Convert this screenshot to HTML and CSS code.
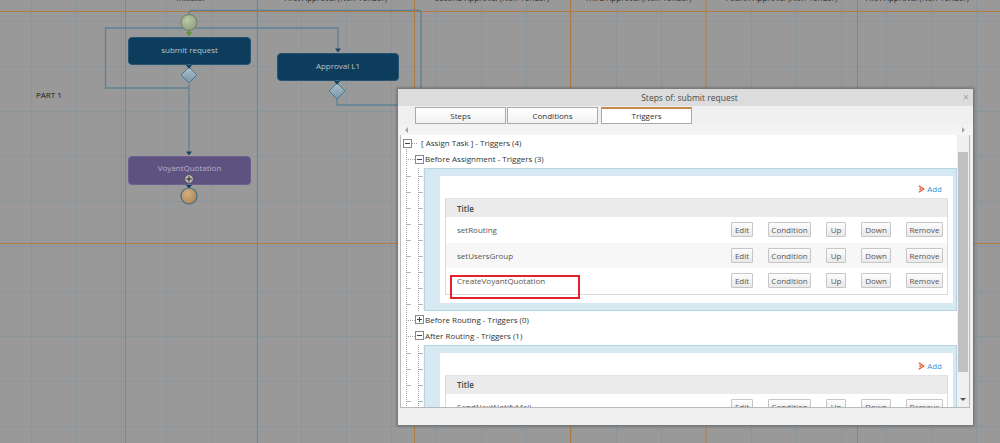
FILE: index.html
```html
<!DOCTYPE html>
<html>
<head>
<meta charset="utf-8">
<title>Steps of: submit request</title>
<link rel="stylesheet" href="styles.css">
</head>
<body>
<div class="canvas">
  <div class="lanes">
    <div class="lane lane0"></div>
    <div class="lane lane1">Initiator</div>
    <div class="lane lane2">First Approval (Non-Tender)</div>
    <div class="lane lane3">Second Approval (Non-Tender)</div>
    <div class="lane lane4">Third Approval (Non-Tender)</div>
    <div class="lane lane5">Fourth Approval (Non-Tender)</div>
    <div class="lane lane6">Fifth Approval (Non-Tender)</div>
  </div>

  <div class="node blue n-submit">submit request</div>
  <div class="node blue n-approval">Approval L1</div>
  <div class="node purple n-voyant">VoyantQuotation</div>
  <div class="part">PART 1</div>

  <svg class="wires" width="1000" height="443" viewBox="0 0 1000 443">
    <defs>
      <linearGradient id="dia" x1="0" y1="0" x2="0" y2="1">
        <stop offset="0" stop-color="#b0c2cf"/>
        <stop offset="1" stop-color="#7694a9"/>
      </linearGradient>
      <radialGradient id="startg" cx="0.4" cy="0.35" r="0.7">
        <stop offset="0" stop-color="#bccaa6"/>
        <stop offset="1" stop-color="#8b9e77"/>
      </radialGradient>
      <radialGradient id="endg" cx="0.4" cy="0.35" r="0.7">
        <stop offset="0" stop-color="#d4ae80"/>
        <stop offset="1" stop-color="#ae8556"/>
      </radialGradient>
    </defs>
    <g stroke="#b07a42" stroke-width="1">
      <line x1="125.5" y1="0" x2="125.5" y2="443"/>
      <line x1="257.5" y1="0" x2="257.5" y2="443"/>
      <line x1="414.5" y1="0" x2="414.5" y2="443"/>
      <line x1="570.5" y1="0" x2="570.5" y2="443"/>
      <line x1="706" y1="0" x2="706" y2="443" stroke="#a98a6a" stroke-width="2"/>
      <line x1="857.5" y1="0" x2="857.5" y2="443"/>
      <line x1="0" y1="11.5" x2="1000" y2="11.5"/>
      <line x1="0" y1="243.5" x2="1000" y2="243.5"/>
    </g>
    <g fill="none" stroke="#5b8294" stroke-width="1.3">
      <path d="M189 15 V13 Q189 10.3 191.7 10.3 H418.3 Q421 10.3 421 13 V100"/>
      <path d="M189 88 H105.5 V28 H338 V50"/>
      <path d="M189 84 V154"/>
      <path d="M337 99 V105 H400"/>
      <path d="M189 64 V67"/>
      <path d="M337.5 80 V83"/>
      <path d="M189 184 V188"/>
    </g>
    <circle cx="189" cy="22.5" r="8" fill="url(#startg)" stroke="#6e7d69" stroke-width="1"/>
    <path d="M189 30.5 V33" stroke="#5f8f3a" stroke-width="1.5"/>
    <polygon points="186,32 192,32 189,36.5" fill="#5f943a"/>
    <polygon points="181,75 189,67 197,75 189,83" fill="url(#dia)" stroke="#4b7590" stroke-width="1"/>
    <polygon points="329,91 337,83 345,91 337,99" fill="url(#dia)" stroke="#4b7590" stroke-width="1"/>
    <g fill="#17435f">
      <polygon points="186,65 192,65 189,69"/>
      <polygon points="335,48.5 341,48.5 338,52.5"/>
      <polygon points="334,81 340,81 337,85"/>
      <polygon points="186,151.5 192,151.5 189,155.5"/>
      <polygon points="186,185 192,185 189,189"/>
    </g>
    <circle cx="189" cy="196" r="8" fill="url(#endg)" stroke="#3f6d8a" stroke-width="1.2"/>
    <circle cx="189" cy="179" r="4.3" fill="#b9b9b9" stroke="#4a4a4a" stroke-width="0.8"/>
    <path d="M186.3 179 H191.7 M189 176.3 V181.7" stroke="#222" stroke-width="1"/>
  </svg>
</div>

<div class="dialog">
  <div class="titlebar">
    <span class="title">Steps of: submit request</span>
    <span class="close">×</span>
  </div>
  <div class="tabs">
    <div class="tab">Steps</div>
    <div class="tab">Conditions</div>
    <div class="tab active">Triggers</div>
  </div>
  <div class="scroller"><span class="arr-l"></span><span class="arr-r"></span></div>
  <div class="panel">
    <div class="tree">
      <div class="trow">
        <span class="gut g1"><span class="exp minus"></span></span>
        <span class="label">[ Assign Task ] - Triggers (4)</span>
      </div>
      <div class="trow">
        <span class="gut g2"><span class="exp minus"></span></span>
        <span class="label">Before Assignment - Triggers (3)</span>
      </div>
      <div class="bsec">
        <div class="gut gs"></div>
        <div class="bpanel">
          <div class="inner">
            <div class="addrow">
              <svg class="addico" width="7" height="8" viewBox="0 0 7 8"><path d="M0.8 0.8 L5.8 4 L0.8 7.2" fill="none" stroke="#e2582b" stroke-width="1.2"/><path d="M1.5 2.6 L3.8 4 L1.5 5.4 Z" fill="#e2582b"/></svg>
              <span class="addtxt">Add</span>
            </div>
            <div class="tbl">
              <div class="thead">Title</div>
              <div class="tr">
                <span class="name">setRouting</span>
                <div class="btns"><span class="btn b-edit">Edit</span><span class="btn b-cond">Condition</span><span class="btn b-up">Up</span><span class="btn b-down">Down</span><span class="btn b-rem">Remove</span></div>
              </div>
              <div class="tr alt">
                <span class="name">setUsersGroup</span>
                <div class="btns"><span class="btn b-edit">Edit</span><span class="btn b-cond">Condition</span><span class="btn b-up">Up</span><span class="btn b-down">Down</span><span class="btn b-rem">Remove</span></div>
              </div>
              <div class="tr">
                <span class="name">CreateVoyantQuotation</span>
                <div class="btns"><span class="btn b-edit">Edit</span><span class="btn b-cond">Condition</span><span class="btn b-up">Up</span><span class="btn b-down">Down</span><span class="btn b-rem">Remove</span></div>
                <span class="mark"></span>
              </div>
            </div>
          </div>
        </div>
      </div>
      <div class="trow">
        <span class="gut g2"><span class="exp plus"></span></span>
        <span class="label">Before Routing - Triggers (0)</span>
      </div>
      <div class="trow">
        <span class="gut g2"><span class="exp minus"></span></span>
        <span class="label">After Routing - Triggers (1)</span>
      </div>
      <div class="bsec">
        <div class="gut gs"></div>
        <div class="bpanel">
          <div class="inner">
            <div class="addrow">
              <svg class="addico" width="7" height="8" viewBox="0 0 7 8"><path d="M0.8 0.8 L5.8 4 L0.8 7.2" fill="none" stroke="#e2582b" stroke-width="1.2"/><path d="M1.5 2.6 L3.8 4 L1.5 5.4 Z" fill="#e2582b"/></svg>
              <span class="addtxt">Add</span>
            </div>
            <div class="tbl">
              <div class="thead">Title</div>
              <div class="tr">
                <span class="name">SendNextNotifyMail</span>
                <div class="btns"><span class="btn b-edit">Edit</span><span class="btn b-cond">Condition</span><span class="btn b-up">Up</span><span class="btn b-down">Down</span><span class="btn b-rem">Remove</span></div>
              </div>
            </div>
          </div>
        </div>
      </div>
    </div>
    <div class="vscroll">
      <div class="thumb"></div>
      <span class="arr-d"></span>
    </div>
  </div>
</div>
</body>
</html>
```

FILE: styles.css
```css
* { box-sizing: border-box; }
html, body { margin: 0; padding: 0; }
body {
  width: 1000px;
  height: 443px;
  overflow: hidden;
  position: relative;
  font-family: "Open Sans", "Liberation Sans", sans-serif;
  font-size: 8px;
  color: #333;
  background: #999;
}

/* ---------- diagram canvas ---------- */
.canvas {
  position: relative;
  width: 1000px;
  height: 443px;
  overflow: hidden;
  background-color: #999999;
  background-image:
    linear-gradient(to right, #8b969c 1px, transparent 1px),
    linear-gradient(to bottom, #8b969c 1px, transparent 1px);
  background-size: 45px 45px, 45px 45px;
  background-position: 31px 0, 0 21px;
}
.lanes {
  display: flex;
  margin-top: -7px;
  height: 10px;
  line-height: 10px;
  color: #2c2c2c;
  white-space: nowrap;
}
.lane { text-align: center; flex: none; }
.lane0 { width: 125px; }
.lane1 { width: 132px; }
.lane2 { width: 157px; }
.lane3 { width: 156px; }
.lane4 { width: 136px; }
.lane5 { width: 151px; }
.lane6 { width: 120px; }

.node {
  position: absolute;
  display: flex;
  align-items: center;
  justify-content: center;
  border-radius: 4px;
  padding-bottom: 3px;
  font-size: 8px;
  white-space: nowrap;
}
.node.blue { background: #0d3d5c; color: #b9c5ce; border: 1px solid #265372; }
.node.purple { background: #5e5380; color: #b7afc8; border: 1px solid #6a5f8e; }
.n-submit { left: 128px; top: 37px; width: 123px; height: 28px; }
.n-approval { left: 277px; top: 53px; width: 122px; height: 28px; }
.n-voyant { left: 128px; top: 156px; width: 123px; height: 29px; padding-bottom: 6px; }
.part {
  position: absolute;
  left: 36px;
  top: 90px;
  font-size: 8px;
  line-height: 10px;
  color: #1c1c1c;
}
.wires { position: absolute; left: 0; top: 0; }

/* ---------- dialog ---------- */
.dialog {
  position: absolute;
  left: 397px;
  top: 88px;
  width: 577px;
  height: 338px;
  border: 1px solid #7a7a7a;
  background: #f0f0f0;
  display: flex;
  flex-direction: column;
  box-shadow: 0 0 3px rgba(0, 0, 0, 0.35);
}
.titlebar {
  flex: none;
  height: 17px;
  background: #dcdcdc;
  position: relative;
  display: flex;
  align-items: center;
  justify-content: center;
  padding-left: 8px;
  font-size: 8.5px;
  color: #4a4a4a;
}
.close {
  position: absolute;
  right: 4px;
  top: 2px;
  font-size: 11px;
  line-height: 12px;
  color: #a3a3a3;
}
.tabs {
  flex: none;
  display: flex;
  gap: 1px;
  height: 18px;
  padding: 1px 0 0 17px;
}
.tab {
  width: 91px;
  height: 17px;
  border: 1px solid #a9a9a9;
  background: linear-gradient(#ffffff, #f2f2f2);
  text-align: center;
  line-height: 15px;
  color: #333;
}
.tab.active {
  margin-left: 2px;
  background: #ffffff;
  border-top: 2px solid #c58a4d;
  line-height: 14px;
}
.scroller {
  flex: none;
  height: 11px;
  display: flex;
  justify-content: space-between;
  align-items: center;
  padding: 0 8px 0 7px;
  background: linear-gradient(#f1f1f1, #f6f6f6);
}
.arr-l {
  width: 0; height: 0;
  border-right: 3px solid #a5a5a5;
  border-top: 3px solid transparent;
  border-bottom: 3px solid transparent;
}
.arr-r {
  width: 0; height: 0;
  border-left: 3px solid #a5a5a5;
  border-top: 3px solid transparent;
  border-bottom: 3px solid transparent;
}
.panel {
  flex: none;
  display: flex;
  height: 273px;
  margin: 0 3px 0 2px;
  border-left: 1px solid #b9b9b9;
  border-bottom: 1px solid #b9b9b9;
}
.tree {
  width: 556px;
  height: 272px;
  overflow: hidden;
  background: #ffffff;
}
.vscroll {
  width: 13px;
  background: #f0f0f0;
  border-right: 1px solid #bcbcbc;
  display: flex;
  flex-direction: column;
  align-items: center;
}
.thumb {
  margin-top: 17px;
  width: 10px;
  height: 220px;
  background: #c1c1c1;
}
.arr-d {
  margin-top: auto;
  margin-bottom: 6px;
  width: 0; height: 0;
  border-top: 3px solid #555;
  border-left: 3px solid transparent;
  border-right: 3px solid transparent;
}

/* ---------- tree ---------- */
.trow {
  display: flex;
  align-items: center;
  height: 16px;
  white-space: nowrap;
}
.trow + .bsec, .bsec + .trow { margin-top: 1px; }
.label { padding-left: 1px; color: #333; line-height: 16px; }
.gut {
  flex: none;
  height: 16px;
  display: flex;
  align-items: center;
  background-repeat: no-repeat;
}
.g1 {
  width: 19px;
  padding-left: 2px;
  background-image:
    repeating-linear-gradient(to bottom, #a3a3a3 0 1px, transparent 1px 2px),
    repeating-linear-gradient(to right, #a3a3a3 0 1px, transparent 1px 2px);
  background-size: 1px 4px, 6px 1px;
  background-position: 5px 12px, 11px 8px;
}
.g2 {
  width: 23px;
  padding-left: 14px;
  background-image:
    repeating-linear-gradient(to bottom, #a3a3a3 0 1px, transparent 1px 2px),
    repeating-linear-gradient(to right, #a3a3a3 0 1px, transparent 1px 2px);
  background-size: 1px 16px, 9px 1px;
  background-position: 5px 0, 5px 8px;
}
.gs {
  width: 23px;
  height: auto;
  background-image:
    repeating-linear-gradient(to bottom, #a3a3a3 0 1px, transparent 1px 2px),
    repeating-linear-gradient(to bottom, #a3a3a3 0 1px, transparent 1px 2px),
    linear-gradient(to bottom, #b4b4b4 0 1px, transparent 1px),
    linear-gradient(to bottom, #b4b4b4 0 1px, transparent 1px);
  background-size: 1px 100%, 1px 100%, 5px 16px, 5px 16px;
  background-position: 5px 0, 17px 0, 5px 8px, 17px 8px;
  background-repeat: no-repeat, no-repeat, repeat-y, repeat-y;
}
.exp {
  position: relative;
  width: 9px;
  height: 9px;
  border: 1px solid #888;
  background: #fff;
}
.exp::before {
  content: "";
  position: absolute;
  left: 1px;
  top: 3px;
  width: 5px;
  height: 1px;
  background: #444;
}
.exp.plus::after {
  content: "";
  position: absolute;
  left: 3px;
  top: 1px;
  width: 1px;
  height: 5px;
  background: #444;
}

/* ---------- trigger panels ---------- */
.bsec { display: flex; }
.bpanel {
  flex: 1;
  background: #d6e9f2;
  border: 1px solid #b5d5e5;
  padding: 7px 3px 7px 15px;
}
.inner {
  background: #ffffff;
  padding: 0 5px 8px 5px;
}
.addrow {
  height: 22px;
  display: flex;
  justify-content: flex-end;
  align-items: center;
  gap: 2px;
  padding: 4px 6px 0 0;
}
.addtxt { color: #3b8fd9; line-height: 10px; }
.addico { display: block; }
.tbl {
  border: 1px solid #dadada;
  border-top: 1px solid #e4e4e4;
}
.thead {
  height: 18px;
  background: #ebebeb;
  font-weight: 600;
  color: #444;
  padding-left: 11px;
  display: flex;
  align-items: center;
}
.tr {
  position: relative;
  height: 25.5px;
  display: flex;
  align-items: center;
  padding: 0 4px 0 11px;
  color: #555;
  white-space: nowrap;
}
.tr.alt { background: #f7f7f7; }
.tr .name { flex: 1; }
.btns { display: flex; gap: 15px; }
.btn {
  height: 15px;
  border: 1px solid #c6c6c6;
  border-radius: 1px;
  background: linear-gradient(#fdfdfd, #e9e9e9);
  color: #585858;
  text-align: center;
  line-height: 13px;
  font-size: 8px;
}
.b-edit { width: 22px; }
.b-cond { width: 43px; }
.b-up { width: 20px; }
.b-down { width: 30px; }
.b-rem { width: 37px; }
.mark {
  position: absolute;
  left: 4px;
  top: 7px;
  width: 130px;
  height: 24px;
  border: 2px solid #e2222b;
}
```
